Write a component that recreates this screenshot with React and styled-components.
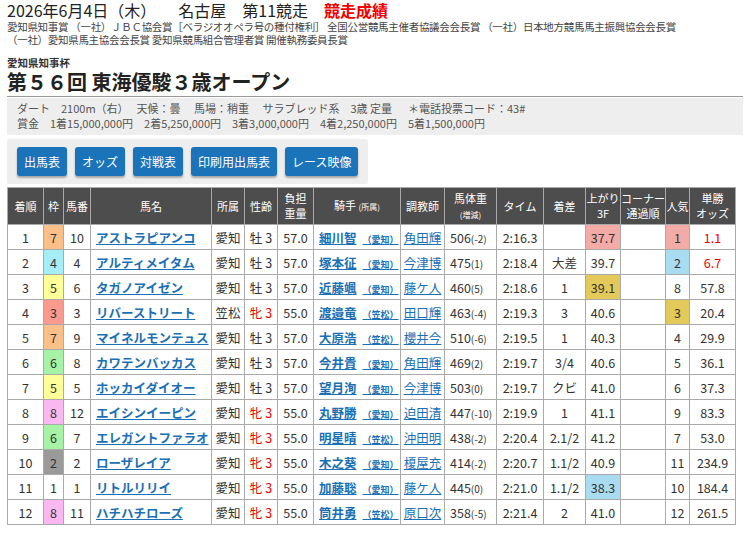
import React from "react";
import styled, { createGlobalStyle } from "styled-components";

const G = createGlobalStyle`
  body{margin:0;background:#fff;font-family:"Noto Sans CJK JP","Noto Sans",sans-serif;color:#333;}
`;
const Page = styled.div`padding:0 7px 0 7px;width:736px;`;
const Top = styled.div`font-size:16px;line-height:20px;color:#222;display:flex;gap:22px;`;
const Red = styled.span`color:#e00;font-weight:bold;`;
const Prizes = styled.div`font-size:10.5px;line-height:13px;color:#444;margin-top:0;white-space:nowrap;letter-spacing:-0.3px;`;
const Sub = styled.div`font-size:10.5px;font-weight:bold;margin-top:11px;line-height:12px;`;
const Title = styled.div`font-size:20px;font-weight:bold;line-height:24px;color:#222;border-bottom:1px solid #999;padding-bottom:2px;margin-top:1px;`;
const Info = styled.div`background:#eee;font-size:11px;line-height:15px;padding:3px 10px 4px;color:#555;margin-top:1px;white-space:pre;`;
const Bar = styled.div`background:#eee;display:inline-flex;gap:8px;padding:8px 10px 8px;margin-top:4px;border-radius:2px;`;
const Btn = styled.div`background:#1b73ba;color:#fff;font-size:12px;height:29px;line-height:29px;padding:0 7px;border-radius:3px;box-shadow:0 2px 2px rgba(0,0,0,.3);`;
const Table = styled.table`border-collapse:collapse;margin-top:3px;width:728px;font-size:12.5px;table-layout:fixed;`;
const Th = styled.th`background:#4d4d4d;color:#fff;font-weight:normal;border:1px solid #aaa;height:36px;font-size:11px;line-height:15px;padding:0;
  small{font-size:8px;}`;
const Td = styled.td`border:1px solid #aaa;height:24px;padding:0 ${p=>p.$l?"5px":"0"};text-align:${p=>p.$l?"left":"center"};
  background:${p=>p.$bg||"#fff"};color:${p=>p.$c||"#333"};white-space:nowrap;overflow:hidden;`;
const A = styled.span`color:#1a6fb5;text-decoration:underline;font-weight:${p=>p.$b?"bold":"normal"};font-size:${p=>p.$s||"12.5px"};`;
const Sm = styled.span`font-size:9px;color:#1a6fb5;margin-left:6px;`;
const W = styled.span`font-size:10px;`;

const waku = {1:"#fff",2:"#9a9a9a",3:"#f99a8e",4:"#a5eef5",5:"#ffff99",6:"#a6f2a6",7:"#fbc08a",8:"#f9b9f0"};
const PINK="#f2aba6",BLUE="#a9dcf0",GOLD="#e3c95a";
const rows=[
[1,7,10,"アストラピアンコ","愛知","牡3","57.0","細川智","愛知","角田輝","506","-2","2:16.3","","37.7",PINK,1,PINK,"1.1",true],
[2,4,4,"アルティメイタム","愛知","牡3","57.0","塚本征","愛知","今津博","475","1","2:18.4","大差","39.7",null,2,BLUE,"6.7",true],
[3,5,6,"タガノアイゼン","愛知","牡3","57.0","近藤颯","愛知","藤ケ人","460","5","2:18.6","1","39.1",GOLD,8,null,"57.8"],
[4,3,3,"リバーストリート","笠松","牝3","55.0","渡邉竜","笠松","田口輝","463","-4","2:19.3","3","40.6",null,3,GOLD,"20.4"],
[5,7,9,"マイネルモンテュス","愛知","牡3","57.0","大原浩","笠松","櫻井今","510","-6","2:19.5","1","40.3",null,4,null,"29.9"],
[6,6,8,"カワテンバッカス","愛知","牡3","57.0","今井貴","愛知","角田輝","469","2","2:19.7","3/4","40.6",null,5,null,"36.1"],
[7,5,5,"ホッカイダイオー","愛知","牡3","57.0","望月洵","愛知","今津博","503","0","2:19.7","クビ","41.0",null,6,null,"37.3"],
[8,8,12,"エイシンイーピン","愛知","牝3","55.0","丸野勝","愛知","迫田清","447","-10","2:19.9","1","41.1",null,9,null,"83.3"],
[9,6,7,"エレガントファラオ","愛知","牝3","55.0","明星晴","笠松","沖田明","438","-2","2:20.4","2.1/2","41.2",null,7,null,"53.0"],
[10,2,2,"ローザレイア","愛知","牝3","55.0","木之葵","愛知","榎屋充","414","-2","2:20.7","1.1/2","40.9",null,11,null,"234.9"],
[11,1,1,"リトルリリイ","愛知","牝3","55.0","加藤聡","愛知","藤ケ人","445","0","2:21.0","1.1/2","38.3",BLUE,10,null,"184.4"],
[12,8,11,"ハチハチローズ","愛知","牝3","55.0","筒井勇","笠松","原口次","358","-5","2:21.4","2","41.0",null,12,null,"261.5"],
];
const widths=[36,20,27,121,33,33,36,87,44,52,47,42,35,45,24,46];

export default function App(){
  return <Page><G/>
    <Top><span>2026年6月4日（木）</span><span>名古屋　第11競走　<Red>競走成績</Red></span></Top>
    <Prizes>愛知県知事賞 （一社）ＪＢＣ協会賞［ベラジオオペラ号の種付権利］ 全国公営競馬主催者協議会会長賞 （一社）日本地方競馬馬主振興協会会長賞<br/>（一社）愛知県馬主協会会長賞 愛知県競馬組合管理者賞 開催執務委員長賞</Prizes>
    <Sub>愛知県知事杯</Sub>
    <Title>第５６回 東海優駿３歳オープン</Title>
    <Info>{"ダート　2100m（右）　 天候：曇　 馬場：稍重　 サラブレッド系　3歳 定量　  ＊電話投票コード：43#\n賞金　1着15,000,000円　2着5,250,000円　3着3,000,000円　4着2,250,000円　5着1,500,000円"}</Info>
    <Bar>{["出馬表","オッズ","対戦表","印刷用出馬表","レース映像"].map(b=><Btn key={b}>{b}</Btn>)}</Bar>
    <Table>
      <colgroup>{widths.map((w,i)=><col key={i} style={{width:w}}/>)}</colgroup>
      <thead><tr>
        <Th>着順</Th><Th>枠</Th><Th>馬番</Th><Th>馬名</Th><Th>所属</Th><Th>性齢</Th><Th>負担<br/>重量</Th><Th>騎手 <small>(所属)</small></Th><Th>調教師</Th><Th>馬体重<br/><small>(増減)</small></Th><Th>タイム</Th><Th>着差</Th><Th>上がり<br/>3F</Th><Th>コーナー<br/>通過順</Th><Th>人気</Th><Th>単勝<br/>オッズ</Th>
      </tr></thead>
      <tbody>{rows.map(r=><tr key={r[0]}>
        <Td>{r[0]}</Td><Td $bg={waku[r[1]]}>{r[1]}</Td><Td>{r[2]}</Td>
        <Td $l><A $b>{r[3]}</A></Td><Td>{r[4]}</Td>
        <Td $c={r[5][0]==="牝"?"#e00":undefined}>{r[5][0]} {r[5][1]}</Td><Td>{r[6]}</Td>
        <Td $l><A $b>{r[7]}<Sm>（{r[8]}）</Sm></A></Td>
        <Td><A>{r[9]}</A></Td>
        <Td $l>{r[10]}<W>({r[11]})</W></Td>
        <Td>{r[12]}</Td><Td>{r[13]}</Td><Td $bg={r[15]}>{r[14]}</Td><Td></Td>
        <Td $bg={r[17]}>{r[16]}</Td><Td $c={r[19]?"#e00":undefined}>{r[18]}</Td>
      </tr>)}</tbody>
    </Table>
  </Page>;
}
